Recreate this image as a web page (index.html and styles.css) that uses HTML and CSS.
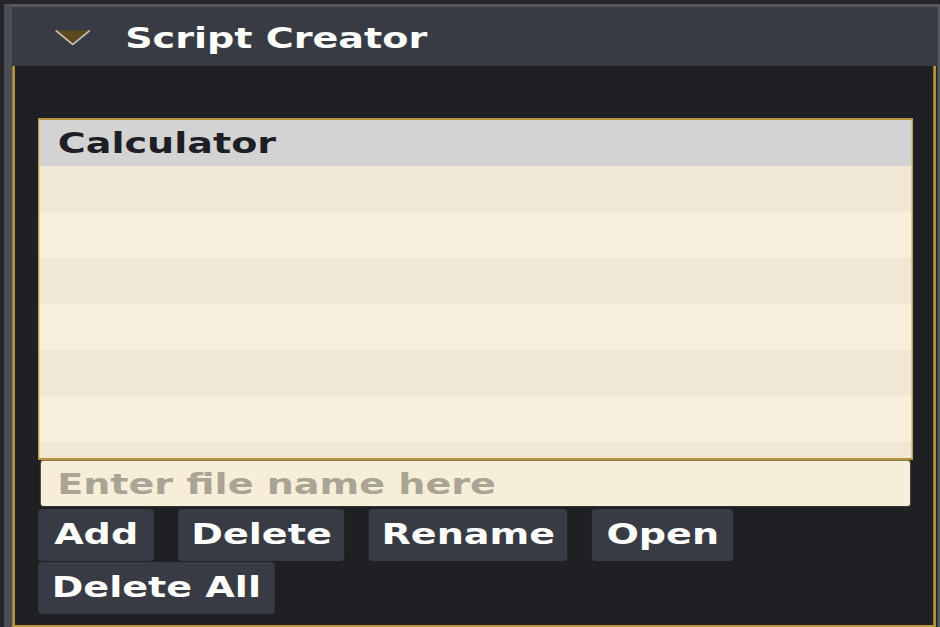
FILE: index.html
```html
<!DOCTYPE html>
<html lang="en">
<head>
<meta charset="utf-8">
<title>Script Creator</title>
<link rel="stylesheet" href="styles.css">
</head>
<body>
<div class="stage">
  <div class="frame">
    <div class="header">
      <svg class="expander" width="27" height="17" viewBox="0 0 27 17" aria-hidden="true">
        <polygon points="1,1.5 26,1.5 13.5,15.5" fill="#5b4a1d"/>
        <polyline points="1,1.5 13.5,15.5 26,1.5" fill="none" stroke="#c8c2b4" stroke-width="1.4" stroke-linejoin="round"/>
      </svg>
      <span class="title">Script Creator</span>
    </div>
    <div class="panel">
      <div class="list">
        <div class="row selected">Calculator</div>
        <div class="row alt"></div>
        <div class="row"></div>
        <div class="row alt"></div>
        <div class="row"></div>
        <div class="row alt"></div>
        <div class="row"></div>
        <div class="row alt"></div>
      </div>
      <input class="name" type="text" placeholder="Enter file name here">
      <div class="buttons">
        <button class="btn btn-wide">Add</button>
        <button class="btn">Delete</button>
        <button class="btn">Rename</button>
        <button class="btn btn-mid">Open</button>
        <button class="btn btn-last">Delete All</button>
      </div>
    </div>
  </div>
</div>
</body>
</html>
```
FILE: styles.css
```css
html, body {
  margin: 0;
  padding: 0;
  background: #1f2024;
  overflow: hidden;
}

.stage {
  width: 691px;
  height: 627px;
  box-sizing: border-box;
  padding: 4px 0 0 3px;
  transform: scaleX(1.3604);
  transform-origin: 0 0;
  font-family: "DejaVu Sans", Verdana, sans-serif;
  font-weight: bold;
  font-size: 28px;
  background: #25262a;
}

.frame {
  height: 623px;
  box-sizing: border-box;
  border-top: 3px solid #56585d;
  border-left: 6px solid #4c4e54;
  border-right: 2px solid #56585d;
  display: flex;
  flex-direction: column;
  background: #1f2024;
}

.header {
  height: 59px;
  box-sizing: border-box;
  padding: 4px 0 0 31px;
  background: #383b43;
  display: flex;
  align-items: center;
  gap: 25px;
  color: #ffffff;
  line-height: 1;
}

.expander {
  display: block;
  flex: none;
  margin-top: -3px;
}

.title {
  white-space: nowrap;
}

.panel {
  flex: 1;
  margin-right: 1.5px;
  border: 2px solid #b8953c;
  border-top: none;
  padding: 52px 15px 11px 17px;
  display: flex;
  flex-direction: column;
  background: #1f2024;
}

.list {
  height: 342px;
  box-sizing: border-box;
  border: 2px solid #b5953f;
  border-left-width: 1.5px;
  border-right-width: 1.5px;
  overflow: hidden;
  background: #f7efdb;
}

.row {
  height: 46px;
  line-height: 48px;
  padding-left: 13.5px;
  color: #1e1f26;
  background: #f7efdb;
  white-space: nowrap;
}

.row.alt {
  background: #f0e8d4;
}

.row.selected {
  background: #d3d3d3;
}

.name {
  display: block;
  height: 47px;
  box-sizing: border-box;
  margin: 0 1px 0 0.5px;
  padding: 2px 0 0 12.5px;
  border: 1px solid #34332f;
  border-top-color: #8a7a4c;
  border-radius: 3px;
  background: #f7eed9;
  font: inherit;
  color: #1e1f26;
  outline: none;
}

.name::placeholder {
  color: #a9a494;
  opacity: 1;
}

.buttons {
  margin-top: 2px;
  display: flex;
  flex-wrap: wrap;
  column-gap: 18px;
  row-gap: 1px;
}

.btn {
  height: 52px;
  padding: 0 9.3px;
  border: none;
  border-radius: 3px;
  background: #383b43;
  color: #ffffff;
  font: inherit;
  line-height: 52px;
  white-space: nowrap;
}

.btn-wide {
  padding: 0 11.8px;
}

.btn-mid {
  padding: 0 10.5px;
}

.btn-last {
  padding: 0 10px;
}
```
